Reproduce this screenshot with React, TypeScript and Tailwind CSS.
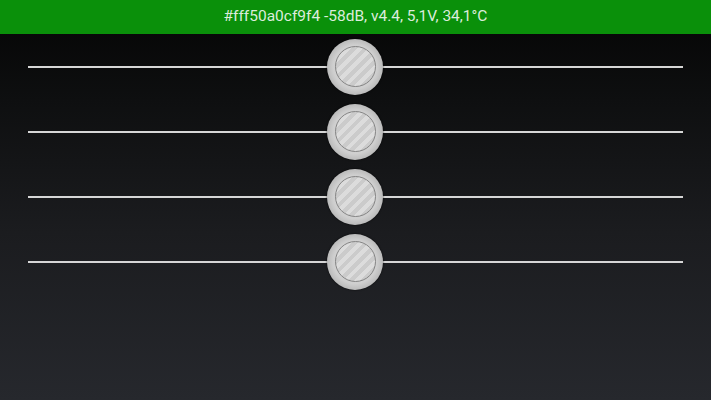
import React from "react";

function Thumb() {
  return (
    <div className="absolute left-1/2 top-1/2 h-[56px] w-[56px] -translate-x-1/2 -translate-y-1/2 rounded-full bg-[radial-gradient(circle,#d8d8d8_0%,#cfcfcf_55%,#b0b0b0_78%,#6e6e6e_100%)] shadow-[0_0_2px_rgba(0,0,0,0.8)] flex items-center justify-center">
      <div className="h-[41px] w-[41px] rounded-full border-[1.5px] border-[#858585] bg-[repeating-linear-gradient(135deg,#dcdcdc_0px,#dcdcdc_4px,#cbcbcb_4px,#cbcbcb_8px)]" />
    </div>
  );
}

function SliderRow() {
  return (
    <div className="relative h-[65px] px-[28px] flex items-center">
      <div className="relative h-[2px] w-full bg-[#d6d6d6]">
        <div className="absolute left-[327px] top-1/2 w-0 h-0">
          <Thumb />
        </div>
      </div>
    </div>
  );
}

export default function App() {
  return (
    <div
      className="w-[711px] h-[400px] overflow-hidden flex flex-col bg-[linear-gradient(180deg,#040404_0%,#0e0f10_25%,#1b1c1f_58%,#26282d_100%)]"
      style={{ fontFamily: "Roboto, 'Noto Sans', sans-serif" }}
    >
      <div className="h-[34px] shrink-0 bg-[#0a900a] flex items-center justify-center text-[15.5px] text-[#dcecdc]">
        #fff50a0cf9f4 -58dB, v4.4, 5,1V, 34,1°C
      </div>
      <div className="flex flex-col">
        <SliderRow />
        <SliderRow />
        <SliderRow />
        <SliderRow />
      </div>
    </div>
  );
}
